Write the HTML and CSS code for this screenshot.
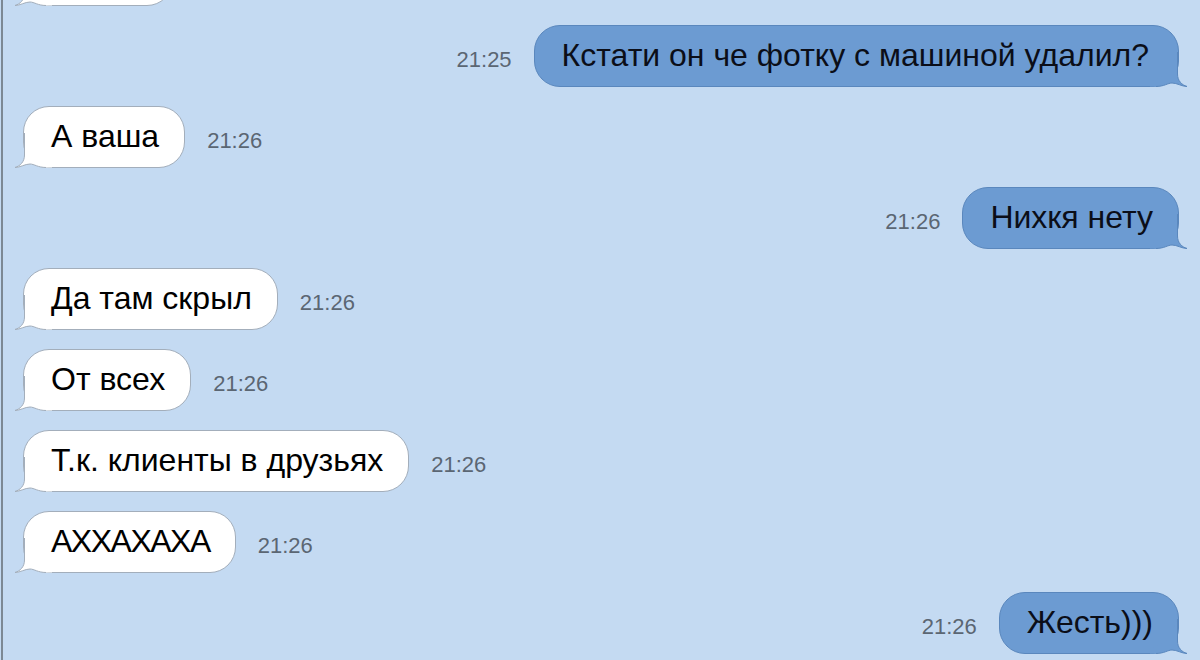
FILE: index.html
```html
<!DOCTYPE html>
<html lang="ru">
<head>
<meta charset="utf-8">
<title>Чат</title>
<link rel="stylesheet" href="styles.css">
</head>
<body>
<div class="chat">
  <div class="row in first">
    <div class="bubble stub">
      <svg class="tail" viewBox="0 0 40 36" width="40" height="36"><path class="tf" d="M12.5 0 L12.5 22 C12.5 29 8 33 3 34.5 C8 34.5 13 31 18 31 C22 31 26 34.5 34 34.5 L40 34.5 L40 30 L24 22 L16 8 Z"/><path class="ts" d="M12.5 0 L12.5 22 C12.5 29 8 33 3 34.5 C8 34.5 13 31 18 31 C22 31 26 34.5 34 34.5"/></svg>
    </div>
  </div>

  <div class="row out">
    <span class="time">21:25</span>
    <div class="bubble big">Кстати он че фотку с машиной удалил?
      <svg class="tail" viewBox="0 0 40 36" width="40" height="36"><path class="tf" d="M12.5 0 L12.5 22 C12.5 29 8 33 3 34.5 C8 34.5 13 31 18 31 C22 31 26 34.5 34 34.5 L40 34.5 L40 30 L24 22 L16 8 Z"/><path class="ts" d="M12.5 0 L12.5 22 C12.5 29 8 33 3 34.5 C8 34.5 13 31 18 31 C22 31 26 34.5 34 34.5"/></svg>
    </div>
  </div>

  <div class="row in">
    <div class="bubble">А ваша
      <svg class="tail" viewBox="0 0 40 36" width="40" height="36"><path class="tf" d="M12.5 0 L12.5 22 C12.5 29 8 33 3 34.5 C8 34.5 13 31 18 31 C22 31 26 34.5 34 34.5 L40 34.5 L40 30 L24 22 L16 8 Z"/><path class="ts" d="M12.5 0 L12.5 22 C12.5 29 8 33 3 34.5 C8 34.5 13 31 18 31 C22 31 26 34.5 34 34.5"/></svg>
    </div>
    <span class="time">21:26</span>
  </div>

  <div class="row out">
    <span class="time">21:26</span>
    <div class="bubble">Нихкя нету
      <svg class="tail" viewBox="0 0 40 36" width="40" height="36"><path class="tf" d="M12.5 0 L12.5 22 C12.5 29 8 33 3 34.5 C8 34.5 13 31 18 31 C22 31 26 34.5 34 34.5 L40 34.5 L40 30 L24 22 L16 8 Z"/><path class="ts" d="M12.5 0 L12.5 22 C12.5 29 8 33 3 34.5 C8 34.5 13 31 18 31 C22 31 26 34.5 34 34.5"/></svg>
    </div>
  </div>

  <div class="row in">
    <div class="bubble">Да там скрыл
      <svg class="tail" viewBox="0 0 40 36" width="40" height="36"><path class="tf" d="M12.5 0 L12.5 22 C12.5 29 8 33 3 34.5 C8 34.5 13 31 18 31 C22 31 26 34.5 34 34.5 L40 34.5 L40 30 L24 22 L16 8 Z"/><path class="ts" d="M12.5 0 L12.5 22 C12.5 29 8 33 3 34.5 C8 34.5 13 31 18 31 C22 31 26 34.5 34 34.5"/></svg>
    </div>
    <span class="time">21:26</span>
  </div>

  <div class="row in">
    <div class="bubble">От всех
      <svg class="tail" viewBox="0 0 40 36" width="40" height="36"><path class="tf" d="M12.5 0 L12.5 22 C12.5 29 8 33 3 34.5 C8 34.5 13 31 18 31 C22 31 26 34.5 34 34.5 L40 34.5 L40 30 L24 22 L16 8 Z"/><path class="ts" d="M12.5 0 L12.5 22 C12.5 29 8 33 3 34.5 C8 34.5 13 31 18 31 C22 31 26 34.5 34 34.5"/></svg>
    </div>
    <span class="time">21:26</span>
  </div>

  <div class="row in">
    <div class="bubble">Т.к. клиенты в друзьях
      <svg class="tail" viewBox="0 0 40 36" width="40" height="36"><path class="tf" d="M12.5 0 L12.5 22 C12.5 29 8 33 3 34.5 C8 34.5 13 31 18 31 C22 31 26 34.5 34 34.5 L40 34.5 L40 30 L24 22 L16 8 Z"/><path class="ts" d="M12.5 0 L12.5 22 C12.5 29 8 33 3 34.5 C8 34.5 13 31 18 31 C22 31 26 34.5 34 34.5"/></svg>
    </div>
    <span class="time">21:26</span>
  </div>

  <div class="row in">
    <div class="bubble tight">АХХАХАХА
      <svg class="tail" viewBox="0 0 40 36" width="40" height="36"><path class="tf" d="M12.5 0 L12.5 22 C12.5 29 8 33 3 34.5 C8 34.5 13 31 18 31 C22 31 26 34.5 34 34.5 L40 34.5 L40 30 L24 22 L16 8 Z"/><path class="ts" d="M12.5 0 L12.5 22 C12.5 29 8 33 3 34.5 C8 34.5 13 31 18 31 C22 31 26 34.5 34 34.5"/></svg>
    </div>
    <span class="time">21:26</span>
  </div>

  <div class="row out">
    <span class="time">21:26</span>
    <div class="bubble">Жесть)))
      <svg class="tail" viewBox="0 0 40 36" width="40" height="36"><path class="tf" d="M12.5 0 L12.5 22 C12.5 29 8 33 3 34.5 C8 34.5 13 31 18 31 C22 31 26 34.5 34 34.5 L40 34.5 L40 30 L24 22 L16 8 Z"/><path class="ts" d="M12.5 0 L12.5 22 C12.5 29 8 33 3 34.5 C8 34.5 13 31 18 31 C22 31 26 34.5 34 34.5"/></svg>
    </div>
  </div>
</div>
</body>
</html>
```
FILE: styles.css
```css
html, body {
  margin: 0;
  padding: 0;
  height: 100%;
  overflow: hidden;
  background: #c4daf2;
}

.chat {
  box-sizing: border-box;
  height: 660px;
  margin-left: 1px;
  border-left: 2px solid #7c8894;
  padding: 0 21px 0 20px;
  display: flex;
  flex-direction: column;
  gap: 19px;
  font-family: "Liberation Sans", Arial, sans-serif;
}

.row {
  display: flex;
  align-items: center;
  gap: 22px;
  flex: none;
}

.row.first {
  margin-top: -56px;
}

.row.out {
  justify-content: flex-end;
}

.bubble {
  position: relative;
  box-sizing: border-box;
  height: 62px;
  padding: 0 25px 2px 27px;
  border-radius: 26px;
  display: flex;
  align-items: center;
  font-size: 32px;
  line-height: 1;
  white-space: nowrap;
}

.bubble.stub {
  width: 150px;
}

.bubble.big {
  padding-right: 29px;
}

.bubble.tight {
  letter-spacing: -1.5px;
}

.in .bubble {
  background: #ffffff;
  border: 1px solid #a3aebb;
  color: #000;
}

.out .bubble {
  background: #6c9bd2;
  border: 1px solid #5a87bd;
  color: #0b0e18;
}

.time {
  font-size: 22px;
  color: #5b6673;
  padding-top: 8px;
}

.tail {
  position: absolute;
  bottom: -2px;
  display: block;
  overflow: visible;
}

.in .tail {
  left: -12px;
}

.out .tail {
  right: -12px;
  transform: scaleX(-1);
}

.tf {
  stroke: none;
}

.ts {
  fill: none;
  stroke-width: 1;
}

.in .tf { fill: #ffffff; }
.in .ts { stroke: #a3aebb; }
.out .tf { fill: #6c9bd2; }
.out .ts { stroke: #5a87bd; }
```
